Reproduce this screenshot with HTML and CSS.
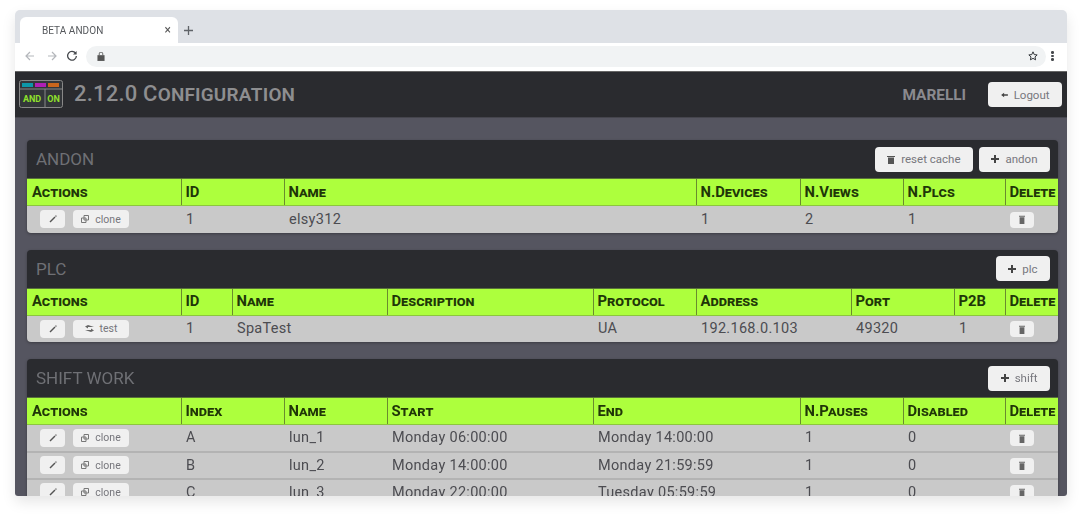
FILE: index.html
```html
<!DOCTYPE html>
<html lang="en">
<head>
<meta charset="utf-8">
<title>BETA ANDON</title>
<link rel="stylesheet" href="styles.css">
</head>
<body>
<div class="window">
  <div class="chrome">
    <div class="tabstrip">
      <div class="tab"><span class="tab-title">BETA ANDON</span><span class="tab-close">×</span></div>
      <svg class="newtab" width="11" height="11" viewBox="0 0 11 11"><path d="M5.5 1v9M1 5.5h9" stroke="#5f6368" stroke-width="1.3" fill="none"/></svg>
    </div>
    <div class="toolbar">
      <svg class="nav" width="12" height="12" viewBox="0 0 12 12"><path d="M10 6H2M6 2L2 6l4 4" stroke="#b4b7bb" stroke-width="1.2" fill="none"/></svg>
      <svg class="nav nav-tight" width="12" height="12" viewBox="0 0 12 12"><path d="M2 6h8M6 2l4 4-4 4" stroke="#b4b7bb" stroke-width="1.2" fill="none"/></svg>
      <svg class="nav" width="12" height="12" viewBox="0 0 12 12"><path d="M9.6 3.2A4.4 4.4 0 1 0 10.4 6" stroke="#45484c" stroke-width="1.3" fill="none"/><path d="M10.6 1v3.6H7z" fill="#45484c"/></svg>
      <div class="omnibox">
        <svg width="8" height="9" viewBox="0 0 9 10"><path d="M0.5 3.5h8V10h-8z" fill="#555"/><path d="M2.5 3.5V2a2 2 0 0 1 4 0v1.500" stroke="#555" fill="none"/></svg>
        <svg class="star" width="10" height="10" viewBox="0 0 12 12"><path d="M6 1l1.500 3.300 3.500.4-2.600 2.400.7 3.500L6 8.800l-3.100 1.800.7-3.500L1 4.700l3.500-.4z" stroke="#33363a" stroke-width="1.200" fill="none"/></svg>
      </div>
      <div class="kebab"><i></i><i></i><i></i></div>
    </div>
  </div>
  <div class="app">
    <header class="appbar">
      <svg class="logo" width="44" height="28" viewBox="0 0 44 28">
        <rect x="0.500" y="0.500" width="43" height="27" rx="2" fill="#33363a" stroke="#888"/>
        <rect x="3" y="3" width="11" height="4" fill="#0d97a8"/><rect x="16" y="3" width="11" height="4" fill="#b01fb5"/><rect x="29" y="3" width="11" height="4" fill="#c9651c"/>
        <path d="M1 9h42M26 9v18" stroke="#888"/>
        <text x="13" y="22" class="logo-text">AND</text><text x="34.500" y="22" class="logo-text">ON</text>
      </svg>
      <h1 class="apptitle">2.12.0 Configuration</h1>
      <span class="user">MARELLI</span>
      <button class="btn btn-top"><svg class="ico" width="7" height="6" viewBox="0 0 9 8"><path d="M0 4l4-3v2h5v2H4v2z" fill="#444"/></svg>Logout</button>
    </header>
    <main class="content">
      <section class="panel">
        <div class="panel-head"><h2>ANDON</h2><div class="tools">
          <button class="btn btn-top"><svg class="ico" width="8" height="9" viewBox="0 0 8 9"><path d="M0 1h8v1H0zM1 2.500h6V9H1z" fill="#555"/></svg>reset cache</button>
          <button class="btn btn-top"><svg class="ico" width="8" height="8" viewBox="0 0 8 8"><path d="M3 0h2v3h3v2H5v3H3V5H0V3h3z" fill="#444"/></svg>andon</button>
        </div></div>
        <table>
          <colgroup><col class="c154"><col class="c103"><col class="c412"><col class="c104"><col class="c103"><col class="c102"><col></colgroup>
          <thead><tr><th>Actions</th><th>ID</th><th>Name</th><th>N.Devices</th><th>N.Views</th><th>N.Plcs</th><th>Delete</th></tr></thead>
          <tbody><tr class="last">
            <td class="acts"><button class="btn sm sq"><svg width="8" height="8" viewBox="0 0 8 8"><path d="M1 7l5-5" stroke="#555" stroke-width="1.500" fill="none"/><path d="M6.500.6L7.400 1.500" stroke="#555" stroke-width="1.200"/></svg></button><button class="btn sm"><svg class="ico" width="8" height="8" viewBox="0 0 8 8"><path d="M3 .5h4.500V5H3z" stroke="#777" fill="none"/><path d="M.5 3H5v4.500H.5z" stroke="#777" fill="none"/></svg>clone</button></td>
            <td>1</td><td>elsy312</td><td>1</td><td>2</td><td>1</td>
            <td class="del"><button class="btn sm tr"><svg width="6" height="9" viewBox="0 0 6 9"><path d="M0 .8h6v1H0zM.6 2.200h4.800V9H.6z" fill="#666"/></svg></button></td>
          </tr></tbody>
        </table>
      </section>
      <section class="panel">
        <div class="panel-head"><h2>PLC</h2><div class="tools">
          <button class="btn btn-top"><svg class="ico" width="8" height="8" viewBox="0 0 8 8"><path d="M3 0h2v3h3v2H5v3H3V5H0V3h3z" fill="#444"/></svg>plc</button>
        </div></div>
        <table>
          <colgroup><col class="c154"><col class="c51"><col class="c155"><col class="c206"><col class="c103"><col class="c155"><col class="c103"><col class="c51"><col></colgroup>
          <thead><tr><th>Actions</th><th>ID</th><th>Name</th><th>Description</th><th>Protocol</th><th>Address</th><th>Port</th><th>P2B</th><th>Delete</th></tr></thead>
          <tbody><tr class="last">
            <td class="acts"><button class="btn sm sq"><svg width="8" height="8" viewBox="0 0 8 8"><path d="M1 7l5-5" stroke="#555" stroke-width="1.500" fill="none"/><path d="M6.500.6L7.400 1.500" stroke="#555" stroke-width="1.200"/></svg></button><button class="btn sm"><svg class="ico" width="9" height="7" viewBox="0 0 9 7"><path d="M0 5h6V3.500L9 5.500 6 7zM9 2H3v1.500L0 1.500 3 0z" fill="#666"/></svg>test</button></td>
            <td>1</td><td>SpaTest</td><td></td><td>UA</td><td>192.168.0.103</td><td>49320</td><td>1</td>
            <td class="del"><button class="btn sm tr"><svg width="6" height="9" viewBox="0 0 6 9"><path d="M0 .8h6v1H0zM.6 2.200h4.800V9H.6z" fill="#666"/></svg></button></td>
          </tr></tbody>
        </table>
      </section>
      <section class="panel">
        <div class="panel-head"><h2>SHIFT WORK</h2><div class="tools">
          <button class="btn btn-top"><svg class="ico" width="8" height="8" viewBox="0 0 8 8"><path d="M3 0h2v3h3v2H5v3H3V5H0V3h3z" fill="#444"/></svg>shift</button>
        </div></div>
        <table>
          <colgroup><col class="c154"><col class="c103"><col class="c103"><col class="c206"><col class="c207"><col class="c103"><col class="c102"><col></colgroup>
          <thead><tr><th>Actions</th><th>Index</th><th>Name</th><th>Start</th><th>End</th><th>N.Pauses</th><th>Disabled</th><th>Delete</th></tr></thead>
          <tbody>
            <tr>
              <td class="acts"><button class="btn sm sq"><svg width="8" height="8" viewBox="0 0 8 8"><path d="M1 7l5-5" stroke="#555" stroke-width="1.500" fill="none"/><path d="M6.500.6L7.400 1.500" stroke="#555" stroke-width="1.200"/></svg></button><button class="btn sm"><svg class="ico" width="8" height="8" viewBox="0 0 8 8"><path d="M3 .5h4.500V5H3z" stroke="#777" fill="none"/><path d="M.5 3H5v4.500H.5z" stroke="#777" fill="none"/></svg>clone</button></td>
              <td>A</td><td>lun_1</td><td>Monday 06:00:00</td><td>Monday 14:00:00</td><td>1</td><td>0</td>
              <td class="del"><button class="btn sm tr"><svg width="6" height="9" viewBox="0 0 6 9"><path d="M0 .8h6v1H0zM.6 2.200h4.800V9H.6z" fill="#666"/></svg></button></td>
            </tr>
            <tr>
              <td class="acts"><button class="btn sm sq"><svg width="8" height="8" viewBox="0 0 8 8"><path d="M1 7l5-5" stroke="#555" stroke-width="1.500" fill="none"/><path d="M6.500.6L7.400 1.500" stroke="#555" stroke-width="1.200"/></svg></button><button class="btn sm"><svg class="ico" width="8" height="8" viewBox="0 0 8 8"><path d="M3 .5h4.500V5H3z" stroke="#777" fill="none"/><path d="M.5 3H5v4.500H.5z" stroke="#777" fill="none"/></svg>clone</button></td>
              <td>B</td><td>lun_2</td><td>Monday 14:00:00</td><td>Monday 21:59:59</td><td>1</td><td>0</td>
              <td class="del"><button class="btn sm tr"><svg width="6" height="9" viewBox="0 0 6 9"><path d="M0 .8h6v1H0zM.6 2.200h4.800V9H.6z" fill="#666"/></svg></button></td>
            </tr>
            <tr>
              <td class="acts"><button class="btn sm sq"><svg width="8" height="8" viewBox="0 0 8 8"><path d="M1 7l5-5" stroke="#555" stroke-width="1.500" fill="none"/><path d="M6.500.6L7.400 1.500" stroke="#555" stroke-width="1.200"/></svg></button><button class="btn sm"><svg class="ico" width="8" height="8" viewBox="0 0 8 8"><path d="M3 .5h4.500V5H3z" stroke="#777" fill="none"/><path d="M.5 3H5v4.500H.5z" stroke="#777" fill="none"/></svg>clone</button></td>
              <td>C</td><td>lun_3</td><td>Monday 22:00:00</td><td>Tuesday 05:59:59</td><td>1</td><td>0</td>
              <td class="del"><button class="btn sm tr"><svg width="6" height="9" viewBox="0 0 6 9"><path d="M0 .8h6v1H0zM.6 2.200h4.800V9H.6z" fill="#666"/></svg></button></td>
            </tr>
          </tbody>
        </table>
      </section>
    </main>
  </div>
</div>
</body>
</html>
```
FILE: styles.css
```css
* { box-sizing: border-box; }
html, body { margin: 0; height: 518px; overflow: hidden; background: #fff; }
body { font-family: Roboto, "Liberation Sans", sans-serif; }
.window {
  margin: 10px 16px 0 15px;
  height: 486px;
  overflow: hidden;
  border-radius: 5px 5px 3px 3px;
  background: #fff;
  box-shadow: 0 6px 14px rgba(0,0,0,.1);
  display: flex;
  flex-direction: column;
}
.chrome { flex: none; filter: blur(.3px); }
.tabstrip { height: 33px; background: #dee1e6; display: flex; align-items: flex-end; padding-left: 5px; }
.tab {
  width: 158px; height: 26px; background: #fff; border-radius: 6px 6px 0 0;
  display: flex; align-items: center; padding: 0 7px 0 22px;
  font-size: 10px; color: #55585c;
}
.tab-title { flex: 1; letter-spacing: .05px; }
.tab-close { font-size: 12px; color: #555; }
.newtab { margin: 0 0 7px 5px; }
.toolbar { height: 28px; background: #fff; display: flex; align-items: center; padding: 0 8px 2px 9px; }
.nav { margin-right: 10px; }
.nav-tight { margin-right: 8px; }
.omnibox {
  flex: 1; height: 21px; background: #f1f3f4; border-radius: 11px; margin-left: -2px;
  display: flex; align-items: center; justify-content: space-between; padding: 0 5px 0 11px;
}
.star { margin-right: 3px; }
.kebab { width: 13px; display: flex; flex-direction: column; align-items: center; gap: 1px; }
.kebab i { width: 2.500px; height: 2.500px; border-radius: 50%; background: #45484c; display: block; }
.app { flex: 1; background: #555560; filter: blur(.6px); min-height: 0; border-top: 1px solid #666; }
.appbar {
  height: 46px; background: #2a2b2f; display: flex; align-items: center;
  padding: 0 5px 0 4px; border-bottom: 1px solid #45454d;
}
.logo { flex: none; margin-top: -2px; }
.logo-text { font: 700 9px Roboto, sans-serif; fill: #8fe02c; text-anchor: middle; }
.apptitle {
  margin: -2px 0 0 11px; flex: 1; font-size: 22px; font-weight: 500;
  font-variant: small-caps; color: #8e8e90; letter-spacing: .2px;
}
.user { font-size: 15.400px; font-weight: 700; color: #8a8a8f; margin: 1px 22px 0 0; }
.btn {
  border: 0; background: #f0f0f0; color: #6e6e74; font: 400 10.500px Roboto, sans-serif;
  border-radius: 4px; padding: 0; display: inline-flex; align-items: center; justify-content: center;
}
.btn-top { height: 25px; padding: 0 12.500px; font-size: 11.500px; color: #77777d; }
.ico { margin-right: 6px; flex: none; }
.content { padding: 22px 9px 0 12px; display: flex; flex-direction: column; gap: 17px; }
.panel { background: #2a2b2f; border-radius: 4px; box-shadow: 0 1px 3px rgba(0,0,0,.3); overflow: hidden; flex: none; }
.panel-head { height: 38px; display: flex; align-items: center; justify-content: space-between; padding: 0 8px 0 9px; }
.panel-head h2 { margin: 0; font-size: 17px; font-weight: 400; color: #6f7075; }
.tools { display: flex; gap: 6px; }
table { width: 100%; table-layout: fixed; border-collapse: collapse; }
.c51 { width: 51px; } .c102 { width: 102px; } .c103 { width: 103px; } .c104 { width: 104px; }
.c154 { width: 154px; } .c155 { width: 155px; } .c206 { width: 206px; } .c207 { width: 207px; } .c412 { width: 412px; }
th {
  height: 27px; background: #adff3d; color: #203608; font-size: 14.800px; font-weight: 700; font-variant: small-caps;
  text-align: left; padding: 0 0 1px 4px; border-left: 1px solid #6a8c2e; border-top: 1px solid #58713a; border-bottom: 1px solid #8cc63e;
  white-space: nowrap; overflow: hidden;
}
th:first-child { border-left: 0; padding-left: 5px; }
td {
  height: 27px; background: #c9c9c9; color: #4c4c51; font-size: 14.500px; padding: 0 0 0 5px;
  border-bottom: 2px solid #b3b3b3; white-space: nowrap; letter-spacing: .3px;
}
tr.last td { border-bottom: 0; }
.acts { padding-left: 13px; }
.acts .btn + .btn { margin-left: 8px; }
.sm { height: 18px; min-width: 56px; font-size: 10.500px; letter-spacing: 0; background: #f0f0f0; vertical-align: middle; color: #76767c; }
.sq { min-width: 25px; }
.tr { min-width: 24px; height: 16px; }
.del { padding-left: 5px; }
```
